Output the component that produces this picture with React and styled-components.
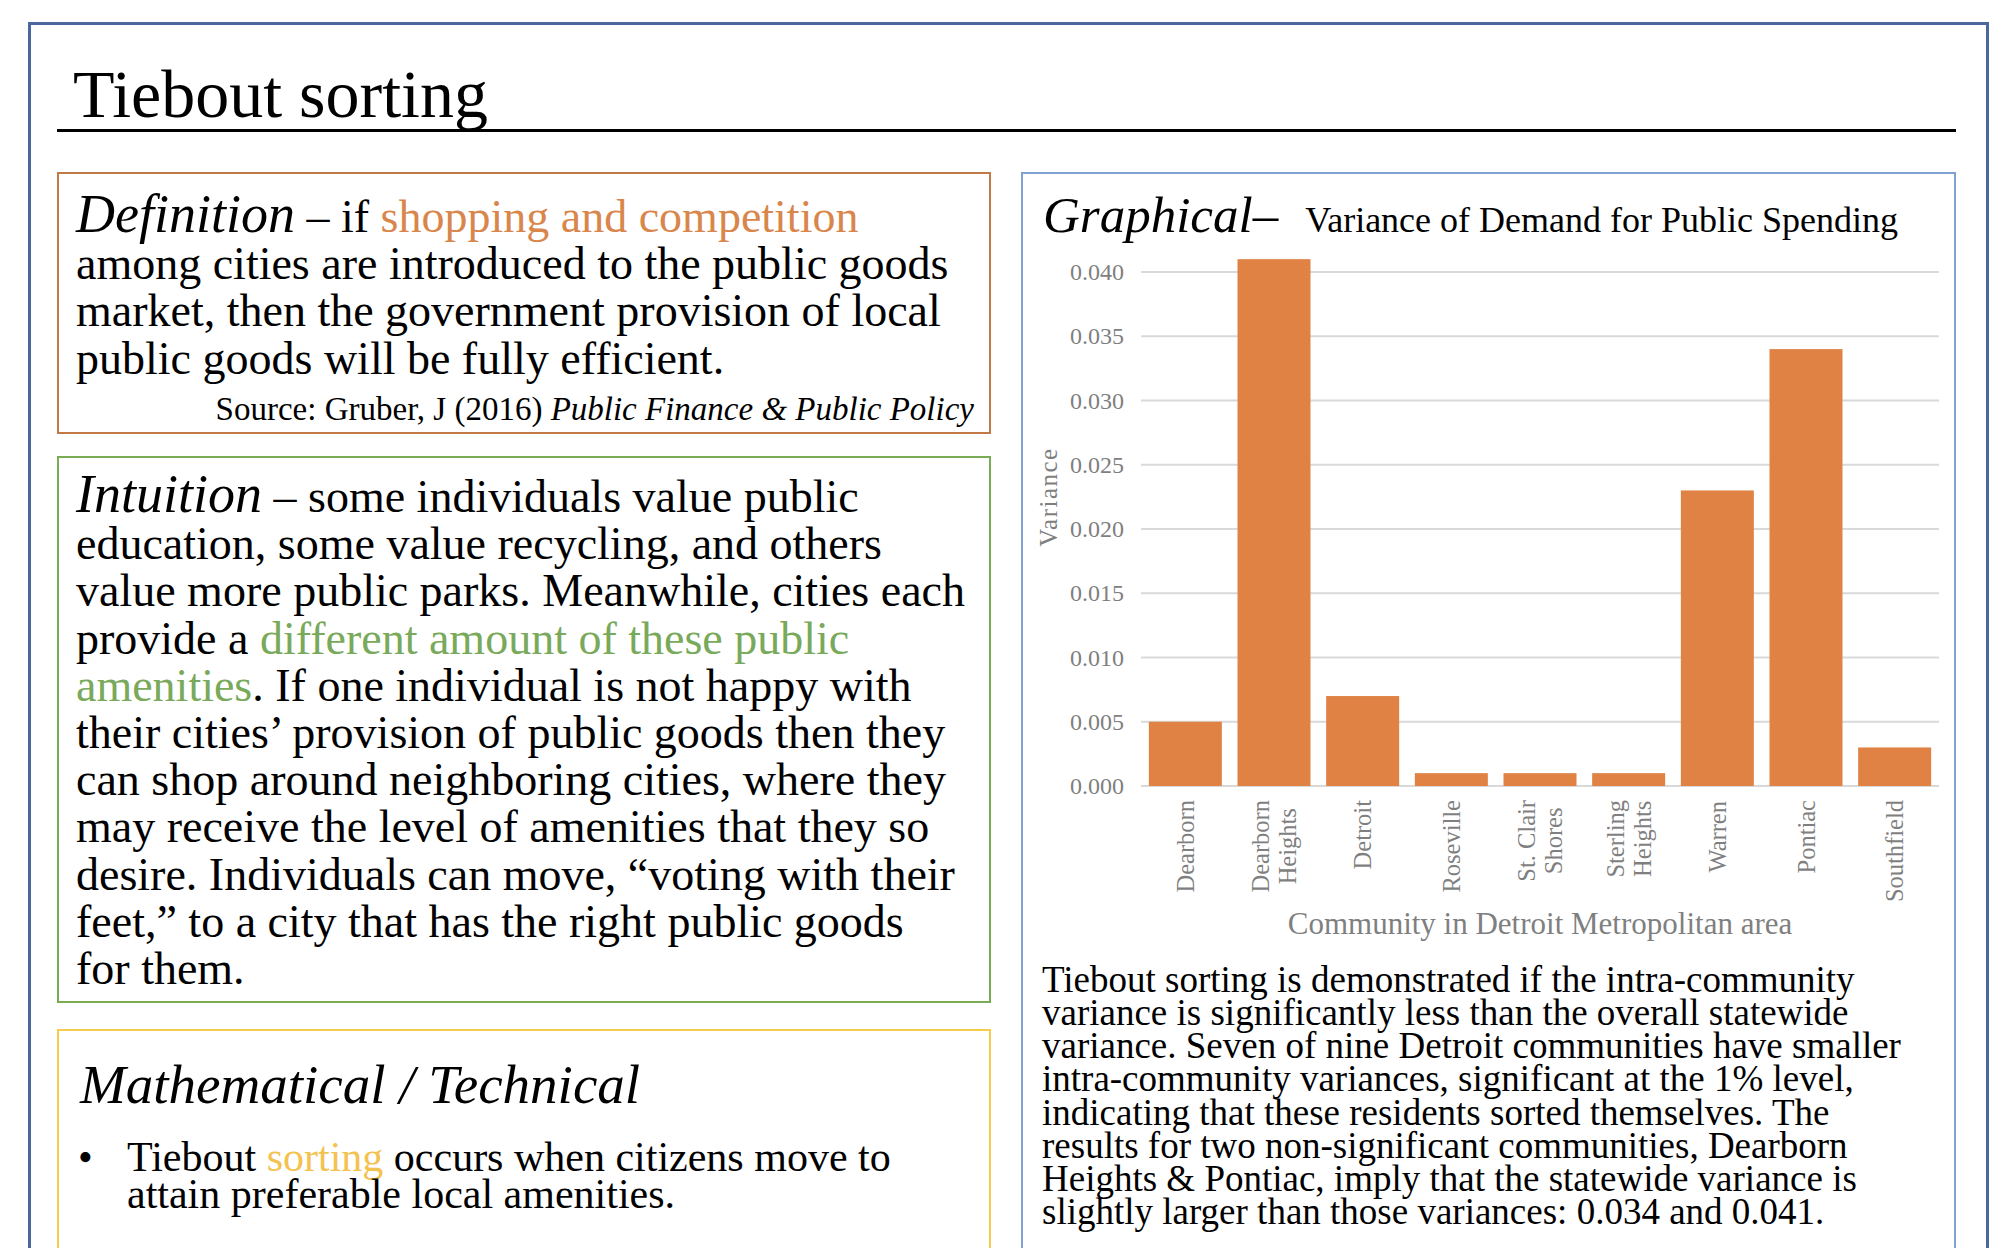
import React from 'react'
import styled, { createGlobalStyle } from 'styled-components'

const GlobalStyle = createGlobalStyle`
  html, body {
    margin: 0;
    padding: 0;
    background: #fff;
    overflow: hidden;
  }
  body {
    font-family: "Liberation Serif", "Times New Roman", serif;
    color: #000;
  }
`

const Frame = styled.div`
  box-sizing: border-box;
  width: 1961px;
  height: 1300px;
  margin: 22px 0 0 28px;
  padding: 0 30px 0 26px;
  border: 3px solid #4a679e;
  border-bottom: none;
`

const TitleBar = styled.header`
  padding: 35px 0 1px 16px;
  border-bottom: 3px solid #000;
`

const Title = styled.h1`
  margin: 0;
  font-size: 68px;
  line-height: 68px;
  font-weight: normal;
`

const Columns = styled.div`
  display: grid;
  grid-template-columns: 934px 935px;
  column-gap: 30px;
  margin-top: 40px;
`

const Column = styled.div`
  display: flex;
  flex-direction: column;
`

const Card = styled.section`
  box-sizing: border-box;
  height: ${p => p.$height}px;
  margin-bottom: ${p => p.$gap || 0}px;
  padding: ${p => p.$pad || '0'};
  border: 2px solid ${p => p.$color};
  overflow: hidden;
`

const Para = styled.p`
  margin: 0;
  font-size: 46px;
  line-height: 47.2px;
  white-space: nowrap;
`

const Lead = styled.span`
  font-style: italic;
  font-size: ${p => p.$size || 54}px;
`

const Accent = styled.span`
  color: ${p => p.$color};
`

const Source = styled.div`
  margin-top: 4px;
  font-size: 33px;
  line-height: 46px;
  text-align: right;
  white-space: nowrap;
  em { font-style: italic; }
`

const MathHeading = styled.h2`
  margin: 0 0 24px 2px;
  font-size: 55px;
  line-height: 60px;
  font-style: italic;
  font-weight: normal;
`

const BulletRow = styled.div`
  display: flex;
  font-size: 42px;
  line-height: 37px;
`

const Bullet = styled.span`
  width: 49px;
  flex: none;
  font-size: 42px;
`

const GraphHeader = styled.div`
  display: flex;
  align-items: baseline;
  height: 61px;
  padding-left: 20px;
`

const GraphLead = styled.span`
  font-size: 51px;
  line-height: 56px;
  font-style: italic;
`

const GraphSubtitle = styled.span`
  margin-left: 27px;
  font-size: 36px;
  line-height: 56px;
`

const ChartSvg = styled.svg`
  display: block;
  width: 931px;
  height: 715px;
`

const Summary = styled.p`
  margin: 0;
  padding-left: 19px;
  font-size: 37px;
  line-height: 33.14px;
  white-space: nowrap;
`

const bars = [
  { lines: ['Dearborn'], v: 0.005, em: 3.776 },
  { lines: ['Dearborn', 'Heights'], v: 0.041, em: 3.776 },
  { lines: ['Detroit'], v: 0.007, em: 2.833 },
  { lines: ['Roseville'], v: 0.001, em: 3.778 },
  { lines: ['St. Clair', 'Shores'], v: 0.001, em: 3.334 },
  { lines: ['Sterling', 'Heights'], v: 0.001, em: 3.167 },
  { lines: ['Warren'], v: 0.023, em: 2.998 },
  { lines: ['Pontiac'], v: 0.034, em: 3.0 },
  { lines: ['Southfield'], v: 0.003, em: 4.167 },
]

const ticks = [0, 0.005, 0.01, 0.015, 0.02, 0.025, 0.03, 0.035, 0.04]

const plot = { left: 118, right: 916, zero: 538, top: 24, max: 0.04 }
const yOf = v => plot.zero - (v / plot.max) * (plot.zero - plot.top)
const slot = (plot.right - plot.left) / bars.length
const labelSize = 24.5

function Chart() {
  return (
    <ChartSvg viewBox="0 0 931 715">
      {ticks.map(t => (
        <g key={t}>
          <line x1={plot.left} x2={plot.right} y1={yOf(t)} y2={yOf(t)}
            stroke="#d9d9d9" strokeWidth="2" />
          <text x="101" y={yOf(t) + 8} textAnchor="end" fontSize="24"
            fill="#7f7f7f" fontFamily="Liberation Serif">{t.toFixed(3)}</text>
        </g>
      ))}
      {bars.map((b, i) => {
        const cx = plot.left + slot * (i + 0.5)
        const top = yOf(b.v)
        const cy = 552 + (b.em * labelSize) / 2
        return (
          <g key={b.lines.join(' ')}>
            <rect x={cx - 36.5} y={top} width="73" height={plot.zero - top} fill="#df8244" />
            {b.lines.map((line, j) => {
              const x = cx + (j - (b.lines.length - 1) / 2) * 27
              return (
                <text key={line} x={x} y={cy} transform={`rotate(-90 ${x} ${cy})`}
                  textAnchor="middle" dominantBaseline="central" fontSize={labelSize}
                  fill="#7f7f7f" fontFamily="Liberation Serif">{line}</text>
              )
            })}
          </g>
        )
      })}
      <text x="25" y="249" transform="rotate(-90 25 249)" textAnchor="middle"
        dominantBaseline="central" fontSize="25" letterSpacing="1.5" fill="#7f7f7f"
        fontFamily="Liberation Serif">Variance</text>
      <text x="517" y="686" textAnchor="middle" fontSize="31" fill="#7f7f7f"
        fontFamily="Liberation Serif">Community in Detroit Metropolitan area</text>
    </ChartSvg>
  )
}

export default function App() {
  return (
    <>
      <GlobalStyle />
      <Frame>
        <TitleBar>
          <Title>Tiebout sorting</Title>
        </TitleBar>
        <Columns>
          <Column>
            <Card $color="#c17a45" $height={262} $gap={22} $pad="17px 15px 0 17px">
              <Para>
                <Lead>Definition</Lead> – if <Accent $color="#d9864c">shopping and competition</Accent><br />
                among cities are introduced to the public goods<br />
                market, then the government provision of local<br />
                public goods will be fully efficient.
              </Para>
              <Source>Source: Gruber, J (2016) <em>Public Finance &amp; Public Policy</em></Source>
            </Card>
            <Card $color="#7aab55" $height={547} $gap={26} $pad="13px 4px 0 17px">
              <Para>
                <Lead>Intuition</Lead> – some individuals value public<br />
                education, some value recycling, and others<br />
                value more public parks. Meanwhile, cities each<br />
                provide a <Accent $color="#79a95a">different amount of these public</Accent><br />
                <Accent $color="#79a95a">amenities</Accent>. If one individual is not happy with<br />
                their cities’ provision of public goods then they<br />
                can shop around neighboring cities, where they<br />
                may receive the level of amenities that they so<br />
                desire. Individuals can move, “voting with their<br />
                feet,” to a city that has the right public goods<br />
                for them.
              </Para>
            </Card>
            <Card $color="#f5cb4c" $height={400} $pad="24px 4px 0 19px">
              <MathHeading>Mathematical / Technical</MathHeading>
              <BulletRow>
                <Bullet>•</Bullet>
                <div>
                  Tiebout <Accent $color="#f3c24f">sorting</Accent> occurs when citizens move to<br />
                  attain preferable local amenities.
                </div>
              </BulletRow>
            </Card>
          </Column>
          <Card $color="#7fa2d3" $height={1200} $pad="13px 0 0 0">
            <GraphHeader>
              <GraphLead>Graphical–</GraphLead>
              <GraphSubtitle>Variance of Demand for Public Spending</GraphSubtitle>
            </GraphHeader>
            <Chart />
            <Summary>
              Tiebout sorting is demonstrated if the intra-community<br />
              variance is significantly less than the overall statewide<br />
              variance. Seven of nine Detroit communities have smaller<br />
              intra-community variances, significant at the 1% level,<br />
              indicating that these residents sorted themselves. The<br />
              results for two non-significant communities, Dearborn<br />
              Heights &amp; Pontiac, imply that the statewide variance is<br />
              slightly larger than those variances: 0.034 and 0.041.
            </Summary>
          </Card>
        </Columns>
      </Frame>
    </>
  )
}
